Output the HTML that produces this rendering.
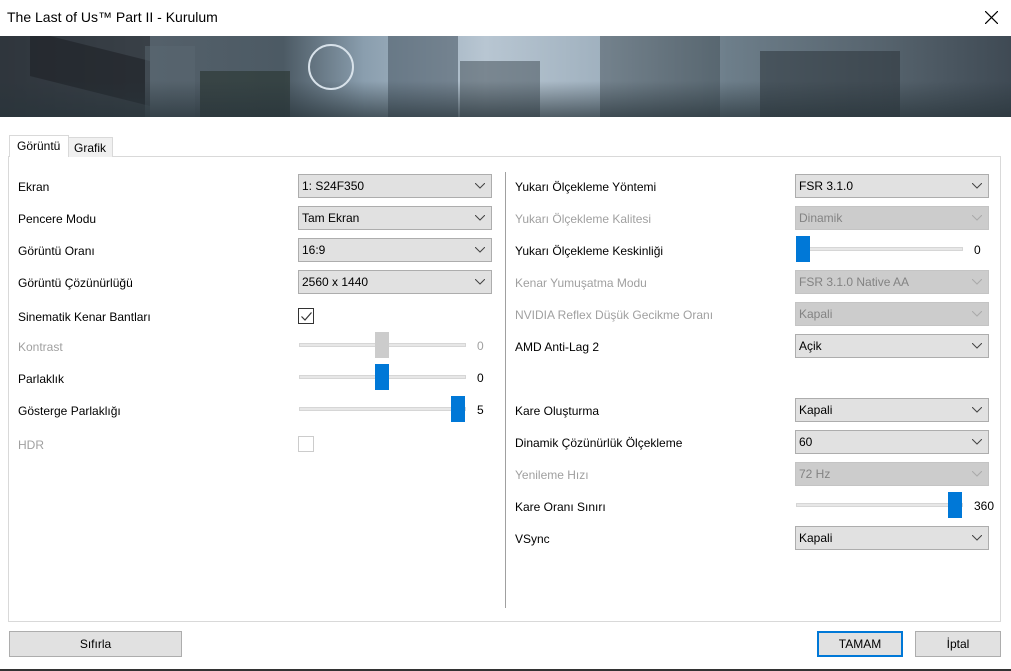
<!DOCTYPE html>
<html><head><meta charset="utf-8"><style>
*{box-sizing:border-box;margin:0;padding:0}
body{width:1011px;height:671px;background:#fff;font-family:"Liberation Sans",sans-serif;font-size:12px;color:#000;position:relative;overflow:hidden}
.a{position:absolute}
.lbl{position:absolute;left:18px;line-height:16px}
.rl{position:absolute;left:515px;line-height:16px}
.dis{color:#a0a0a0}
.cb{position:absolute;height:24px;background:#e1e1e1;border:1px solid #adadad;padding-left:3px;line-height:23px}
.cb.d{background:#cccccc;border-color:#c4c4c4;color:#838383}
.cb svg{position:absolute;right:6px;top:8px}
.tr{position:absolute;height:4px;background:#e7e7e7;border:1px solid #d6d6d6}
.th{position:absolute;width:14px;height:26px;background:#0078d7}
.btn{position:absolute;height:26px;background:#e1e1e1;border:1px solid #adadad;text-align:center;line-height:24px}
.b{position:absolute;background:rgba(50,62,70,.55)}
</style></head><body>
<div class="a" style="left:7px;top:9px;font-size:14px">The Last of Us™ Part II - Kurulum</div>
<svg class="a" style="left:985px;top:11px" width="13" height="13"><path d="M0 0L13 13M13 0L0 13" stroke="#000" stroke-width="1.2"/></svg>
<div class="a" style="left:0;top:36px;width:1011px;height:81px;overflow:hidden;background:linear-gradient(90deg,#3a4650 0%,#54606a 15%,#4c5a64 28%,#8a9eae 36%,#b8c6d2 48%,#9fb0be 60%,#6d7e8a 72%,#55626c 88%,#3f4a54 100%)">
<div class="b" style="left:0;top:0;width:150px;height:81px;background:rgba(40,44,48,.6)"></div>
<div class="b" style="left:30px;top:10px;width:120px;height:45px;transform:skewY(14deg);background:rgba(30,34,38,.6)"></div>
<div class="b" style="left:145px;top:10px;width:50px;height:71px;background:rgba(90,104,114,.5)"></div>
<div class="b" style="left:200px;top:35px;width:90px;height:46px;background:rgba(40,52,46,.6)"></div>
<div class="b" style="left:388px;top:0;width:70px;height:81px;background:rgba(70,84,96,.55)"></div>
<div class="b" style="left:460px;top:25px;width:80px;height:56px;background:rgba(60,72,80,.5)"></div>
<div class="b" style="left:600px;top:0;width:120px;height:81px;background:rgba(60,70,78,.45)"></div>
<div class="b" style="left:760px;top:15px;width:140px;height:66px;background:rgba(40,48,54,.5)"></div>
<div class="a" style="left:0;top:45px;width:1011px;height:36px;background:linear-gradient(180deg,rgba(40,50,55,0),rgba(40,52,58,.7))"></div>
<div class="a" style="left:308px;top:8px;width:46px;height:46px;border:2px solid #d8e2ea;border-radius:50%"></div>
</div>
<div class="a" style="left:8px;top:156px;width:993px;height:466px;border:1px solid #d9d9d9;background:#fff"></div>
<div class="a" style="left:9px;top:135px;width:60px;height:22px;background:#fff;border:1px solid #d9d9d9;border-bottom:none;padding:3px 0 0 7px">Görüntü</div>
<div class="a" style="left:68px;top:137px;width:45px;height:20px;background:#f0f0f0;border:1px solid #d9d9d9;border-bottom:none;padding:3px 0 0 5px">Grafik</div>
<div class="a" style="left:505px;top:172px;width:1px;height:436px;background:#a0a0a0"></div>

<div class="lbl" style="top:179px">Ekran</div>
<div class="lbl" style="top:211px">Pencere Modu</div>
<div class="lbl" style="top:243px">Görüntü Oranı</div>
<div class="lbl" style="top:275px">Görüntü Çözünürlüğü</div>
<div class="lbl" style="top:309px">Sinematik Kenar Bantları</div>
<div class="lbl dis" style="top:339px">Kontrast</div>
<div class="lbl" style="top:371px">Parlaklık</div>
<div class="lbl" style="top:403px">Gösterge Parlaklığı</div>
<div class="lbl dis" style="top:437px">HDR</div>

<div class="cb" style="left:298px;top:174px;width:194px">1: S24F350<svg width="10" height="6"><path d="M0 0L5 5L10 0" fill="none" stroke="#444"/></svg></div>
<div class="cb" style="left:298px;top:206px;width:194px">Tam Ekran<svg width="10" height="6"><path d="M0 0L5 5L10 0" fill="none" stroke="#444"/></svg></div>
<div class="cb" style="left:298px;top:238px;width:194px">16:9<svg width="10" height="6"><path d="M0 0L5 5L10 0" fill="none" stroke="#444"/></svg></div>
<div class="cb" style="left:298px;top:270px;width:194px">2560 x 1440<svg width="10" height="6"><path d="M0 0L5 5L10 0" fill="none" stroke="#444"/></svg></div>
<div class="a" style="left:298px;top:308px;width:16px;height:16px;border:1px solid #333"><svg class="a" style="left:2px;top:3px" width="11" height="9"><path d="M0.5 4.5L4 8L10.5 0.5" fill="none" stroke="#333" stroke-width="1.2"/></svg></div>
<div class="tr" style="left:299px;top:343px;width:167px"></div><div class="th" style="left:375px;top:332px;background:#cccccc"></div><div class="a dis" style="left:477px;top:339px">0</div>
<div class="tr" style="left:299px;top:375px;width:167px"></div><div class="th" style="left:375px;top:364px"></div><div class="a" style="left:477px;top:371px">0</div>
<div class="tr" style="left:299px;top:407px;width:167px"></div><div class="th" style="left:451px;top:396px"></div><div class="a" style="left:477px;top:403px">5</div>
<div class="a" style="left:298px;top:436px;width:16px;height:16px;border:1px solid #ccc"></div>

<div class="rl" style="top:179px">Yukarı Ölçekleme Yöntemi</div>
<div class="rl dis" style="top:211px">Yukarı Ölçekleme Kalitesi</div>
<div class="rl" style="top:243px">Yukarı Ölçekleme Keskinliği</div>
<div class="rl dis" style="top:275px">Kenar Yumuşatma Modu</div>
<div class="rl dis" style="top:307px">NVIDIA Reflex Düşük Gecikme Oranı</div>
<div class="rl" style="top:339px">AMD Anti-Lag 2</div>
<div class="rl" style="top:403px">Kare Oluşturma</div>
<div class="rl" style="top:435px">Dinamik Çözünürlük Ölçekleme</div>
<div class="rl dis" style="top:467px">Yenileme Hızı</div>
<div class="rl" style="top:499px">Kare Oranı Sınırı</div>
<div class="rl" style="top:531px">VSync</div>

<div class="cb" style="left:795px;top:174px;width:194px">FSR 3.1.0<svg width="10" height="6"><path d="M0 0L5 5L10 0" fill="none" stroke="#444"/></svg></div>
<div class="cb d" style="left:795px;top:206px;width:194px">Dinamik<svg width="10" height="6"><path d="M0 0L5 5L10 0" fill="none" stroke="#aaa"/></svg></div>
<div class="tr" style="left:796px;top:247px;width:167px"></div><div class="th" style="left:796px;top:236px"></div><div class="a" style="left:974px;top:243px">0</div>
<div class="cb d" style="left:795px;top:270px;width:194px">FSR 3.1.0 Native AA<svg width="10" height="6"><path d="M0 0L5 5L10 0" fill="none" stroke="#aaa"/></svg></div>
<div class="cb d" style="left:795px;top:302px;width:194px">Kapali<svg width="10" height="6"><path d="M0 0L5 5L10 0" fill="none" stroke="#aaa"/></svg></div>
<div class="cb" style="left:795px;top:334px;width:194px">Açik<svg width="10" height="6"><path d="M0 0L5 5L10 0" fill="none" stroke="#444"/></svg></div>
<div class="cb" style="left:795px;top:398px;width:194px">Kapali<svg width="10" height="6"><path d="M0 0L5 5L10 0" fill="none" stroke="#444"/></svg></div>
<div class="cb" style="left:795px;top:430px;width:194px">60<svg width="10" height="6"><path d="M0 0L5 5L10 0" fill="none" stroke="#444"/></svg></div>
<div class="cb d" style="left:795px;top:462px;width:194px">72 Hz<svg width="10" height="6"><path d="M0 0L5 5L10 0" fill="none" stroke="#aaa"/></svg></div>
<div class="tr" style="left:796px;top:503px;width:167px"></div><div class="th" style="left:948px;top:492px"></div><div class="a" style="left:974px;top:499px">360</div>
<div class="cb" style="left:795px;top:526px;width:194px">Kapali<svg width="10" height="6"><path d="M0 0L5 5L10 0" fill="none" stroke="#444"/></svg></div>

<div class="btn" style="left:9px;top:631px;width:173px">Sıfırla</div>
<div class="btn" style="left:817px;top:631px;width:86px;border:2px solid #0078d7;line-height:22px">TAMAM</div>
<div class="btn" style="left:915px;top:631px;width:86px">İptal</div>
<div class="a" style="left:0;top:669px;width:1011px;height:2px;background:#333"></div>
</body></html>
